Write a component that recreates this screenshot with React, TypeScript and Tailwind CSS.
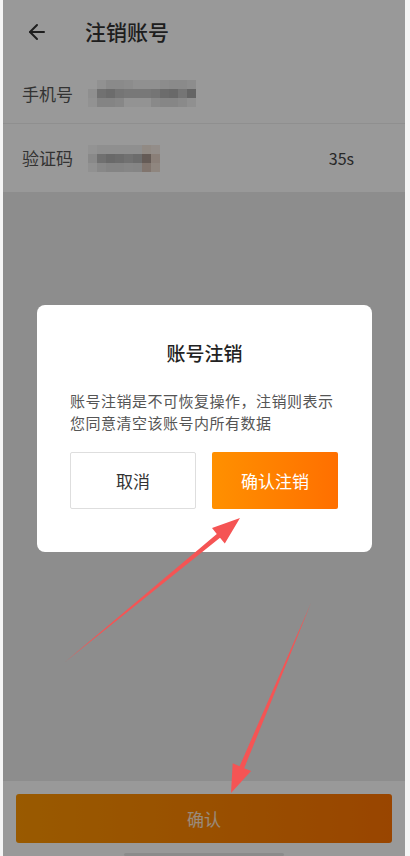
import { ArrowLeft } from "lucide-react"

const font = { fontFamily: '"Noto Sans CJK SC", "Noto Sans", sans-serif' }

const Mosaic = ({ cells }: { cells: string[][] }) => (
  <div className="flex flex-col">
    {cells.map((row, i) => (
      <div key={i} className="flex">
        {row.map((c, j) => (
          <div key={j} className="w-[9px] h-[9px]" style={{ background: c }} />
        ))}
      </div>
    ))}
  </div>
)

const phoneCells = [
  ["#fff", "#f2f2f2", "#e6e6e6", "#e6e6e6", "#e9e9e9", "#f0f0f0", "#f0f0f0", "#f0f0f0", "#eaeaea", "#e6e6e6", "#e6e6e6", "#ececec"],
  ["#eeeeee", "#bdbdbd", "#b5b5b5", "#c4c4c4", "#c9c9c9", "#c9c9c9", "#c9c9c9", "#c4c4c4", "#b5b5b5", "#b0b0b0", "#c4c4c4", "#a8a8a8"],
  ["#f4f4f4", "#dddddd", "#dddddd", "#e2e2e2", "#f6f6f6", "#f6f6f6", "#f6f6f6", "#e4e4e4", "#e0e0e0", "#e0e0e0", "#e6e6e6", "#f0f0f0"],
]

const codeCells = [
  ["#f5f5f5", "#eeeeee", "#eeeeee", "#eeeeee", "#eeeeee", "#eeeeee", "#f2e6dc", "#f6ece4"],
  ["#e4e4e4", "#bbbbbb", "#b0b0b0", "#b5b5b5", "#bdbdbd", "#b5b5b5", "#a99890", "#e6d4c8"],
  ["#f2f2f2", "#e3e3e3", "#dcdcdc", "#dcdcdc", "#e0e0e0", "#dedede", "#d7c4b8", "#eedfd4"],
]

export default function App() {
  return (
    <div className="relative w-[410px] h-[856px] overflow-hidden bg-[#f5f5f5]" style={font}>
      <div className="relative ml-[3px] w-[402px] h-full flex flex-col bg-[#ebebeb]">
        <div className="bg-white">
          <div className="h-[64px] flex items-center">
            <ArrowLeft className="ml-[22px] w-[24px] h-[24px] text-[#333]" strokeWidth={2} />
            <span className="ml-[36px] text-[21px] font-medium text-[#333]">注销账号</span>
          </div>
          <div className="h-[60px] flex items-center px-[19px] border-b border-[#efefef]">
            <span className="text-[17px] text-[#555]">手机号</span>
            <div className="ml-[15px]">
              <Mosaic cells={phoneCells} />
            </div>
          </div>
          <div className="h-[68px] flex items-center px-[19px]">
            <span className="text-[17px] text-[#555]">验证码</span>
            <div className="ml-[15px]">
              <Mosaic cells={codeCells} />
            </div>
            <span className="ml-auto mr-[32px] text-[16px] text-[#444]">35s</span>
          </div>
        </div>
        <div className="flex-1" />
        <div className="h-[75px] bg-white flex flex-col">
          <div className="mt-[13px] mx-[13px] h-[49px] rounded-[3px] bg-gradient-to-r from-[#ff9600] to-[#ff7400] flex items-center justify-center">
            <span className="text-[17px] text-white/80">确认</span>
          </div>
          <div className="mt-auto mx-auto w-[160px] h-[3px] rounded-full bg-[#e8e8e8]" />
        </div>
        <div className="absolute inset-0 bg-black/40" />
      </div>

      <div className="absolute left-[37px] top-[305px] w-[335px] h-[247px] rounded-[8px] bg-white px-[33px] flex flex-col">
        <div className="mt-[35px] text-center text-[19px] font-medium text-[#222] leading-[26px]">账号注销</div>
        <p className="mt-[24px] text-[15px] leading-[22px] text-[#555] tracking-[0.5px]">
          账号注销是不可恢复操作，注销则表示您同意清空该账号内所有数据
        </p>
        <div className="mt-[18px] flex gap-[16px]">
          <div className="w-[126px] h-[57px] rounded-[2px] border border-[#dedede] flex items-center justify-center text-[17px] text-[#333]">取消</div>
          <div className="w-[126px] h-[57px] rounded-[2px] bg-gradient-to-r from-[#ff9000] to-[#ff6f00] flex items-center justify-center text-[17px] text-white">确认注销</div>
        </div>
      </div>

      <svg className="absolute inset-0 pointer-events-none" width="410" height="856" viewBox="0 0 410 856">
        <polygon fill="#f55454" points="65,662 220,537.7 224.8,543.5 240,518 212,528.1 216.8,533.9" />
        <polygon fill="#f55454" points="311,603 244.2,768.2 251.1,771.1 231,793 232.7,763.3 239.6,766.2" />
      </svg>
    </div>
  )
}
